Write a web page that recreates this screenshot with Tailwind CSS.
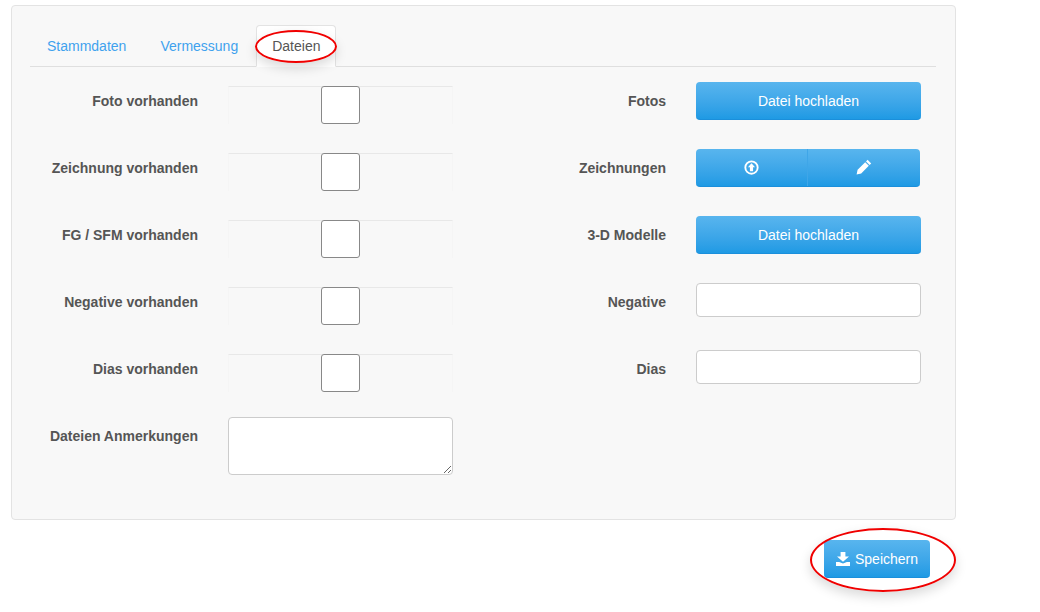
<!DOCTYPE html>
<html lang="de">
<head>
    <meta charset="UTF-8">
    <title>Dateien</title>
    <script src="https://cdn.jsdelivr.net/npm/@tailwindcss/browser@4"></script>
</head>
<body class="relative h-[612px] overflow-hidden bg-white font-['Liberation_Sans',Arial,sans-serif] text-sm leading-5 text-[#555]">
    <!-- Panel -->
    <div class="ml-[11px] mt-[5px] h-[515px] w-[945px] rounded border border-[#e3e3e3] bg-[#f8f8f8] pl-[18px] pr-[19px] pt-[19px]">
        <!-- Tabs -->
        <ul class="flex gap-[2px] border-b border-[#dfdfdf]">
            <li class="-mb-px border border-transparent px-[16px] py-[10px] text-[#3fa2ee]">Stammdaten</li>
            <li class="-mb-px border border-transparent pl-[14px] pr-[15px] py-[10px] text-[#3fa2ee]">Vermessung</li>
            <li class="-mb-px rounded-t border border-[#e3e3e3] border-b-transparent bg-white pl-[15px] pr-[15px] py-[10px]">Dateien</li>
        </ul>

        <!-- Form -->
        <div class="mt-[15px] grid grid-cols-[470px_1fr]">
            <div class="flex flex-col">
                <div class="flex h-[67px]">
                    <label class="w-[168px] pt-[9px] text-right font-bold">Foto vorhanden</label>
                    <div class="ml-[30px] mt-1 flex h-[38px] w-[225px] justify-center border-x border-t border-x-[#f5f5f5] border-t-[#e8e8e8]">
                        <div class="-mt-px h-[38px] w-[39px] rounded-[3px] border border-[#888] bg-white"></div>
                    </div>
                </div>
                <div class="flex h-[67px]">
                    <label class="w-[168px] pt-[9px] text-right font-bold">Zeichnung vorhanden</label>
                    <div class="ml-[30px] mt-1 flex h-[38px] w-[225px] justify-center border-x border-t border-x-[#f5f5f5] border-t-[#e8e8e8]">
                        <div class="-mt-px h-[38px] w-[39px] rounded-[3px] border border-[#888] bg-white"></div>
                    </div>
                </div>
                <div class="flex h-[67px]">
                    <label class="w-[168px] pt-[9px] text-right font-bold">FG / SFM vorhanden</label>
                    <div class="ml-[30px] mt-1 flex h-[38px] w-[225px] justify-center border-x border-t border-x-[#f5f5f5] border-t-[#e8e8e8]">
                        <div class="-mt-px h-[38px] w-[39px] rounded-[3px] border border-[#888] bg-white"></div>
                    </div>
                </div>
                <div class="flex h-[67px]">
                    <label class="w-[168px] pt-[9px] text-right font-bold">Negative vorhanden</label>
                    <div class="ml-[30px] mt-1 flex h-[38px] w-[225px] justify-center border-x border-t border-x-[#f5f5f5] border-t-[#e8e8e8]">
                        <div class="-mt-px h-[38px] w-[39px] rounded-[3px] border border-[#888] bg-white"></div>
                    </div>
                </div>
                <div class="flex h-[67px]">
                    <label class="w-[168px] pt-[9px] text-right font-bold">Dias vorhanden</label>
                    <div class="ml-[30px] mt-1 flex h-[38px] w-[225px] justify-center border-x border-t border-x-[#f5f5f5] border-t-[#e8e8e8]">
                        <div class="-mt-px h-[38px] w-[39px] rounded-[3px] border border-[#888] bg-white"></div>
                    </div>
                </div>
                <div class="flex">
                    <label class="w-[168px] pt-[9px] text-right font-bold">Dateien Anmerkungen</label>
                    <textarea class="ml-[30px] block h-[58px] w-[225px] rounded border border-[#ccc] bg-white"></textarea>
                </div>
            </div>

            <div class="flex flex-col">
                <div class="flex h-[67px]">
                    <label class="w-[166px] pt-[9px] text-right font-bold">Fotos</label>
                    <button class="ml-[30px] h-[38px] w-[225px] rounded border-b border-[#1b8fdb] bg-gradient-to-b from-[#58b5ee] to-[#1e9ae4] text-white">Datei hochladen</button>
                </div>
                <div class="flex h-[67px]">
                    <label class="w-[166px] pt-[9px] text-right font-bold">Zeichnungen</label>
                    <div class="ml-[30px] flex h-[38px] w-[224px] rounded border-b border-[#1b8fdb] bg-gradient-to-b from-[#58b5ee] to-[#1e9ae4]">
                        <button class="flex w-[112px] items-center justify-center border-r border-[#3fa6e8] pb-px">
                            <svg class="h-[15px] w-[15px]" viewBox="0 0 16 16"><circle cx="8" cy="8" r="6.6" fill="none" stroke="#fff" stroke-width="2"/><path d="M8 3.4 11.8 7.6H9.7V12H6.3V7.6H4.2Z" fill="#fff"/></svg>
                        </button>
                        <button class="flex flex-1 items-center justify-center pb-px">
                            <svg class="h-[16px] w-[16px]" viewBox="0 0 16 16"><path d="M11.6.8 15.2 4.4 13.6 6 10 2.4ZM9.2 3.2 12.8 6.8 5.2 14.4.6 15.4 1.6 10.8Z" fill="#fff"/></svg>
                        </button>
                    </div>
                </div>
                <div class="flex h-[67px]">
                    <label class="w-[166px] pt-[9px] text-right font-bold">3-D Modelle</label>
                    <button class="ml-[30px] h-[38px] w-[225px] rounded border-b border-[#1b8fdb] bg-gradient-to-b from-[#58b5ee] to-[#1e9ae4] text-white">Datei hochladen</button>
                </div>
                <div class="flex h-[67px]">
                    <label class="w-[166px] pt-[9px] text-right font-bold">Negative</label>
                    <input class="ml-[30px] h-[34px] w-[225px] rounded border border-[#ccc] bg-white">
                </div>
                <div class="flex h-[67px]">
                    <label class="w-[166px] pt-[9px] text-right font-bold">Dias</label>
                    <input class="ml-[30px] h-[34px] w-[225px] rounded border border-[#ccc] bg-white">
                </div>
            </div>
        </div>
    </div>

    <button class="ml-[824px] mt-[20px] flex h-[38px] w-[106px] items-center justify-center gap-[5px] rounded border-b border-[#1b8fdb] bg-gradient-to-b from-[#58b5ee] to-[#1e9ae4] text-white">
        <svg class="h-[14px] w-[14px]" viewBox="0 0 14 14"><path d="M4.6 0H9.4V4.4H13L7 9.8 1 4.4H4.6ZM0 10H3.2L7 11.4 10.8 10H14V14H0Z" fill="#fff"/></svg>
        Speichern
    </button>

    <!-- Red annotation circles -->
    <div class="absolute left-[255px] top-[30px] h-[33px] w-[82px] rounded-[50%] border-2 border-[#f00000] shadow-[0_5px_12px_rgba(0,0,0,0.15)]"></div>
    <div class="absolute left-[810px] top-[528px] h-[64px] w-[146px] rounded-[50%] border-2 border-[#f00000] shadow-[0_5px_12px_rgba(0,0,0,0.15)]"></div>
</body>
</html>
